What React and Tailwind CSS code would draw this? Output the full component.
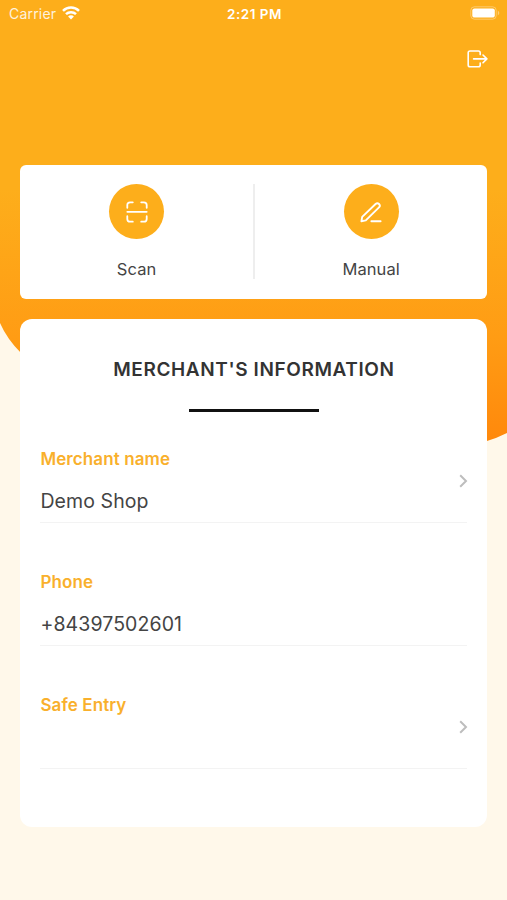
import React from 'react';
import { clsx } from 'clsx';

const FIELDS = [
  { id: 'name', label: 'Merchant name', value: 'Demo Shop', link: true },
  { id: 'phone', label: 'Phone', value: '+84397502601', link: false },
  { id: 'entry', label: 'Safe Entry', value: '', link: true },
];

function Backdrop() {
  return (
    <svg className="absolute inset-0 -z-10" width="507" height="900" viewBox="0 0 507 900">
      <defs>
        <linearGradient id="sun" x1="0" y1="0" x2="0" y2="450" gradientUnits="userSpaceOnUse">
          <stop offset="0" stopColor="#fdae1b" />
          <stop offset="0.42" stopColor="#fdae1b" />
          <stop offset="0.75" stopColor="#ff9c14" />
          <stop offset="1" stopColor="#ff870b" />
        </linearGradient>
      </defs>
      <path d="M0 0H507V433Q497 438 487 441C300 490 100 440 21 353Q7 339 0 323Z" fill="url(#sun)" />
    </svg>
  );
}

function StatusBar() {
  return (
    <header className="grid h-7 grid-cols-3 items-center pl-[9px] pr-[7px] text-[14px] leading-none text-white">
      <div className="flex items-center gap-[6px]">
        <span className="tracking-[0.2px] opacity-85">Carrier</span>
        <svg className="mb-[2px]" width="18" height="14" viewBox="0 0 18 14" fill="none" stroke="currentColor" strokeWidth="2.5">
          <path d="M1 4.8a11.4 11.4 0 0 1 16 0" />
          <path d="M4 8.2a7.1 7.1 0 0 1 10 0" />
          <path d="M9 13.4 6.1 10.6a4 4 0 0 1 5.8 0z" fill="currentColor" stroke="none" />
        </svg>
      </div>
      <span className="pt-px text-center text-[13.5px] font-semibold tracking-[0.5px]">2:21 PM</span>
      <svg className="mb-[2px] justify-self-end" width="30" height="14" viewBox="0 0 30 14">
        <rect x="0.8" y="0.8" width="25.4" height="12.4" rx="3.6" fill="none" stroke="#fff" strokeOpacity="0.35" />
        <rect x="2.3" y="2.4" width="22.5" height="9.2" rx="2.2" fill="#fff" />
        <path d="M27.8 4.6q3 2.4 0 4.8z" fill="#fff" fillOpacity="0.4" />
      </svg>
    </header>
  );
}

function LogoutIcon() {
  return (
    <svg width="22" height="18" viewBox="0 0 22 18" fill="none" stroke="#fff" strokeWidth="1.6" strokeLinecap="round" strokeLinejoin="round">
      <path d="M13.2 4.6V2.8a1.8 1.8 0 0 0-1.8-1.8H3a1.8 1.8 0 0 0-1.8 1.8v12.1a1.8 1.8 0 0 0 1.8 1.8h8.4a1.8 1.8 0 0 0 1.8-1.8v-1.8" />
      <path d="M6.6 8.9h13.2M16 5l3.9 3.9-3.9 3.9" />
    </svg>
  );
}

function ScanIcon() {
  return (
    <svg width="22" height="22" viewBox="0 0 22 22" fill="none" stroke="#fff" strokeWidth="1.8" strokeLinecap="round">
      <path d="M1.3 6.8V4.1a2.8 2.8 0 0 1 2.8-2.8h2.7M15.2 1.3h2.7a2.8 2.8 0 0 1 2.8 2.8v2.7M20.7 15.2v2.7a2.8 2.8 0 0 1-2.8 2.8h-2.7M6.8 20.7H4.1a2.8 2.8 0 0 1-2.8-2.8v-2.7" />
      <path d="M1.3 10.8h19.4" />
    </svg>
  );
}

function PenIcon() {
  return (
    <svg width="22" height="22" viewBox="0 0 22 22" fill="none" stroke="#fff" strokeWidth="1.9" strokeLinecap="round" strokeLinejoin="round">
      <path d="M1.4 20.3 2.2 15.9 15.6 3a2.4 2.4 0 0 1 3.4 3.4L5.8 19.4z" />
      <path d="M11.4 20.2h9.2" />
    </svg>
  );
}

function Action({ icon, label }) {
  return (
    <button className="flex flex-1 flex-col items-center">
      <span className="flex size-[55px] shrink-0 items-center justify-center rounded-full bg-[#fdae1b]">{icon}</span>
      <span className="mt-[18px] text-[16.5px] leading-6 tracking-[0.1px] text-[#444]">{label}</span>
    </button>
  );
}

function Field({ label, value, link, last }) {
  return (
    <div
      className={clsx(
        'flex h-[78px] items-center justify-between border-b border-[#f3f3f3]',
        !last && 'mb-[45px]'
      )}
    >
      <div className="h-full">
        <div className="text-[17px] font-semibold leading-7 tracking-[0.1px] text-[#f9b02c]">{label}</div>
        <div className="mt-[14px] text-[19.5px] leading-7 tracking-[0.1px] text-[#444]">{value}</div>
      </div>
      {link && (
        <svg className="-mr-px mb-[6px]" width="9" height="14" viewBox="0 0 9 14" fill="none" stroke="#bdbdbd" strokeWidth="2">
          <path d="m1.2 1.2 5.8 5.8-5.8 5.8" />
        </svg>
      )}
    </div>
  );
}

export default function App() {
  return (
    <div className="relative isolate h-[900px] w-[507px] overflow-hidden bg-[#fff8ea] font-['Inter',sans-serif]">
      <Backdrop />
      <StatusBar />

      <div className="flex h-[137px] justify-end pr-[18px] pt-[22px]">
        <button className="self-start" aria-label="Log out">
          <LogoutIcon />
        </button>
      </div>

      <main className="pl-[20.4px] pr-[19.6px]">
        <section className="flex h-[134px] rounded-md bg-white pb-5 pt-[19px]">
          <Action icon={<ScanIcon />} label="Scan" />
          <div className="w-[2px] bg-[#eee]" />
          <Action icon={<PenIcon />} label="Manual" />
        </section>

        <section className="mt-5 h-[508px] rounded-xl bg-white px-5 pt-[37px]">
          <h1 className="text-center text-[19px] font-semibold leading-7 tracking-[0.6px] text-[#333]">
            MERCHANT'S INFORMATION
          </h1>
          <div className="mx-auto mb-[33px] mt-[25px] h-[3px] w-[130px] bg-[#111]" />
          {FIELDS.map((f, i) => (
            <Field key={f.id} label={f.label} value={f.value} link={f.link} last={i === FIELDS.length - 1} />
          ))}
        </section>
      </main>
    </div>
  );
}
